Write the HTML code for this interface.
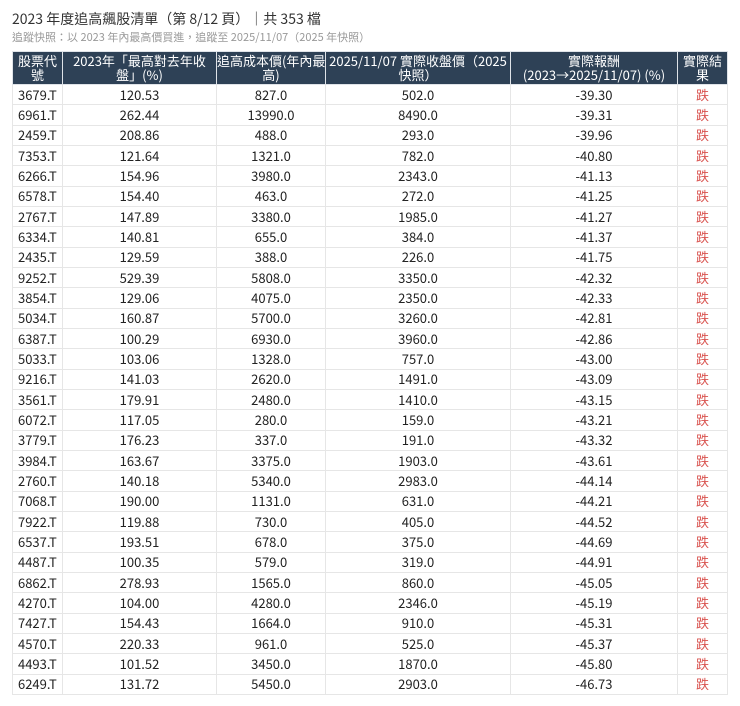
<!DOCTYPE html>
<html><head><meta charset="utf-8"><style>
body{margin:0;background:#fff;font-family:"Liberation Sans","Noto Sans CJK TC",sans-serif;color:#222;}
.t{position:absolute;left:12px;top:9px;font-size:14px;font-family:"Noto Sans CJK TC",sans-serif;color:#333;}
.s{position:absolute;left:12px;top:29px;font-size:11px;font-family:"Noto Sans CJK TC",sans-serif;color:#999;}
table{position:absolute;left:12px;top:51px;border-collapse:collapse;width:715px;table-layout:fixed;font-family:"Noto Sans CJK TC",sans-serif;font-size:13px;}
th{background:#2e4156;color:#fff;font-weight:normal;font-size:13px;line-height:14px;height:33px;padding:0;border:1px solid #dfe3e8;text-align:center;box-sizing:border-box;white-space:nowrap;overflow:hidden}
td{height:20.33px;padding:0;border:1px solid #e6e6e6;text-align:center;line-height:18px;box-sizing:border-box}
td:first-child{text-align:left;padding-left:5px}
td.r{color:#d9534f}
</style></head><body>
<div class="t">2023 年度追高飆股清單（第 8/12 頁）｜共 353 檔</div>
<div class="s">追蹤快照：以 2023 年內最高價買進，追蹤至 2025/11/07（2025 年快照）</div>
<table>
<colgroup><col style="width:50px"><col style="width:154px"><col style="width:109px"><col style="width:185px"><col style="width:167px"><col style="width:50px"></colgroup>
<tr><th>股票代<br>號</th><th>2023年「最高對去年收<br>盤」(%)</th><th>追高成本價(年內最<br>高)</th><th>2025/11/07 實際收盤價（2025<br>快照）</th><th>實際報酬<br>(2023→2025/11/07) (%)</th><th>實際結<br>果</th></tr>
<tr><td>3679.T</td><td>120.53</td><td>827.0</td><td>502.0</td><td>-39.30</td><td class="r">跌</td></tr>
<tr><td>6961.T</td><td>262.44</td><td>13990.0</td><td>8490.0</td><td>-39.31</td><td class="r">跌</td></tr>
<tr><td>2459.T</td><td>208.86</td><td>488.0</td><td>293.0</td><td>-39.96</td><td class="r">跌</td></tr>
<tr><td>7353.T</td><td>121.64</td><td>1321.0</td><td>782.0</td><td>-40.80</td><td class="r">跌</td></tr>
<tr><td>6266.T</td><td>154.96</td><td>3980.0</td><td>2343.0</td><td>-41.13</td><td class="r">跌</td></tr>
<tr><td>6578.T</td><td>154.40</td><td>463.0</td><td>272.0</td><td>-41.25</td><td class="r">跌</td></tr>
<tr><td>2767.T</td><td>147.89</td><td>3380.0</td><td>1985.0</td><td>-41.27</td><td class="r">跌</td></tr>
<tr><td>6334.T</td><td>140.81</td><td>655.0</td><td>384.0</td><td>-41.37</td><td class="r">跌</td></tr>
<tr><td>2435.T</td><td>129.59</td><td>388.0</td><td>226.0</td><td>-41.75</td><td class="r">跌</td></tr>
<tr><td>9252.T</td><td>529.39</td><td>5808.0</td><td>3350.0</td><td>-42.32</td><td class="r">跌</td></tr>
<tr><td>3854.T</td><td>129.06</td><td>4075.0</td><td>2350.0</td><td>-42.33</td><td class="r">跌</td></tr>
<tr><td>5034.T</td><td>160.87</td><td>5700.0</td><td>3260.0</td><td>-42.81</td><td class="r">跌</td></tr>
<tr><td>6387.T</td><td>100.29</td><td>6930.0</td><td>3960.0</td><td>-42.86</td><td class="r">跌</td></tr>
<tr><td>5033.T</td><td>103.06</td><td>1328.0</td><td>757.0</td><td>-43.00</td><td class="r">跌</td></tr>
<tr><td>9216.T</td><td>141.03</td><td>2620.0</td><td>1491.0</td><td>-43.09</td><td class="r">跌</td></tr>
<tr><td>3561.T</td><td>179.91</td><td>2480.0</td><td>1410.0</td><td>-43.15</td><td class="r">跌</td></tr>
<tr><td>6072.T</td><td>117.05</td><td>280.0</td><td>159.0</td><td>-43.21</td><td class="r">跌</td></tr>
<tr><td>3779.T</td><td>176.23</td><td>337.0</td><td>191.0</td><td>-43.32</td><td class="r">跌</td></tr>
<tr><td>3984.T</td><td>163.67</td><td>3375.0</td><td>1903.0</td><td>-43.61</td><td class="r">跌</td></tr>
<tr><td>2760.T</td><td>140.18</td><td>5340.0</td><td>2983.0</td><td>-44.14</td><td class="r">跌</td></tr>
<tr><td>7068.T</td><td>190.00</td><td>1131.0</td><td>631.0</td><td>-44.21</td><td class="r">跌</td></tr>
<tr><td>7922.T</td><td>119.88</td><td>730.0</td><td>405.0</td><td>-44.52</td><td class="r">跌</td></tr>
<tr><td>6537.T</td><td>193.51</td><td>678.0</td><td>375.0</td><td>-44.69</td><td class="r">跌</td></tr>
<tr><td>4487.T</td><td>100.35</td><td>579.0</td><td>319.0</td><td>-44.91</td><td class="r">跌</td></tr>
<tr><td>6862.T</td><td>278.93</td><td>1565.0</td><td>860.0</td><td>-45.05</td><td class="r">跌</td></tr>
<tr><td>4270.T</td><td>104.00</td><td>4280.0</td><td>2346.0</td><td>-45.19</td><td class="r">跌</td></tr>
<tr><td>7427.T</td><td>154.43</td><td>1664.0</td><td>910.0</td><td>-45.31</td><td class="r">跌</td></tr>
<tr><td>4570.T</td><td>220.33</td><td>961.0</td><td>525.0</td><td>-45.37</td><td class="r">跌</td></tr>
<tr><td>4493.T</td><td>101.52</td><td>3450.0</td><td>1870.0</td><td>-45.80</td><td class="r">跌</td></tr>
<tr><td>6249.T</td><td>131.72</td><td>5450.0</td><td>2903.0</td><td>-46.73</td><td class="r">跌</td></tr>
</table>
</body></html>
